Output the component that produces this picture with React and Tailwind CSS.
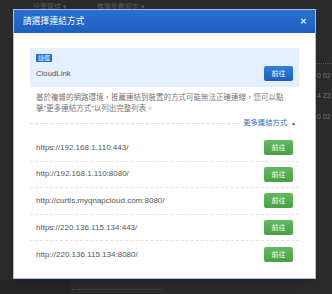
import React from "react";

const urls = [
  "https://192.168.1.110:443/",
  "http://192.168.1.110:8080/",
  "http://curtis.myqnapcloud.com:8080/",
  "https://220.136.115.134:443/",
  "http://220.136.115.134:8080/",
];

const font = "font-['Liberation_Sans','Noto_Sans_CJK_TC',sans-serif]";

export default function App() {
  return (
    <div className={`relative w-[332px] h-[294px] overflow-hidden bg-[#2b2b2b] leading-[1.2] ${font}`}>
      {/* page behind the dialog */}
      <div className="flex gap-[30px] pl-[33px] pt-[3px] text-[7px] text-[#5a5a5a]">
        <span>分享連結 ▾</span>
        <span>進階參數設定 ▾</span>
      </div>
      <div className="absolute right-0 top-[63px] w-[16px] border-t border-dotted border-[#555]" />
      <div className="absolute left-[317px] top-[72px] flex flex-col gap-[12px] text-[7px] text-[#777]">
        <span>0 02</span>
        <span>4 23</span>
        <span>0 02</span>
      </div>
      <div className="absolute left-0 top-[280px] w-[70px] h-[14px] bg-[#262626]" />
      <div className="absolute left-[72px] top-[289px] w-[90px] border-t border-dotted border-[#555]" />

      {/* Dialog */}
      <div className="absolute left-[13px] top-[9px] w-[303px] h-[270px] bg-white border border-[#9fc0e8] shadow-lg">
        <div className="h-[23px] flex items-center justify-between pl-[9px] pr-[8px] bg-gradient-to-b from-[#2a6fd0] to-[#1c5fc0]">
          <h1 className="text-[8.6px] tracking-[0.2px] text-white">請選擇連結方式</h1>
          <span className="text-[8px] font-bold text-[#e8f0ff] leading-none">✕</span>
        </div>

        <div className="pt-[15px] px-[16px]">
          {/* Recommended */}
          <div className="h-[39px] bg-[#e6f0fc] pt-[6px] px-[6px]">
            <div className="flex">
              <span className="flex items-center h-[8px] px-[2px] rounded-[1px] bg-[#1f6fd8] text-[6px] leading-none text-white">捷徑</span>
            </div>
            <div className="flex items-center justify-between mt-[4px] h-[15px]">
              <span className="text-[7.8px] leading-none text-[#555]">CloudLink</span>
              <button className="w-[29px] h-[15px] rounded-[2px] bg-gradient-to-b from-[#2f80dc] to-[#1a5fbd] text-[7px] leading-none text-white">前往</button>
            </div>
          </div>

          <p className="mt-[5px] px-[6px] text-[7.5px] leading-[11px] text-[#777]">
            基於複雜的網路環境，推薦連結到裝置的方式可能無法正確連線，您可以點
            <br />
            擊"更多連結方式"以列出完整列表。
          </p>

          <div className="flex items-center mt-[4px] h-[10px]">
            <div className="flex-1 border-t border-dashed border-[#dcdcdc]" />
            <span className="ml-[3px] text-[7.3px] leading-none text-[#2b6cc4]">更多連結方式</span>
            <span className="ml-[4px] mr-[3px] text-[5px] leading-none text-[#2b6cc4]">▲</span>
          </div>

          <div className="mt-[7px]">
            {urls.map((url, i) => (
              <div
                key={url}
                className={`h-[26.6px] flex items-center justify-between px-[6px] ${i < urls.length - 1 ? "border-b border-dashed border-[#e2e2e2]" : ""}`}
              >
                <span className="text-[8px] leading-none text-[#555]">{url}</span>
                <button className="w-[29px] h-[15px] rounded-[2px] bg-gradient-to-b from-[#62bb5e] to-[#45a144] text-[7px] leading-none text-white">前往</button>
              </div>
            ))}
          </div>
        </div>
      </div>
    </div>
  );
}
